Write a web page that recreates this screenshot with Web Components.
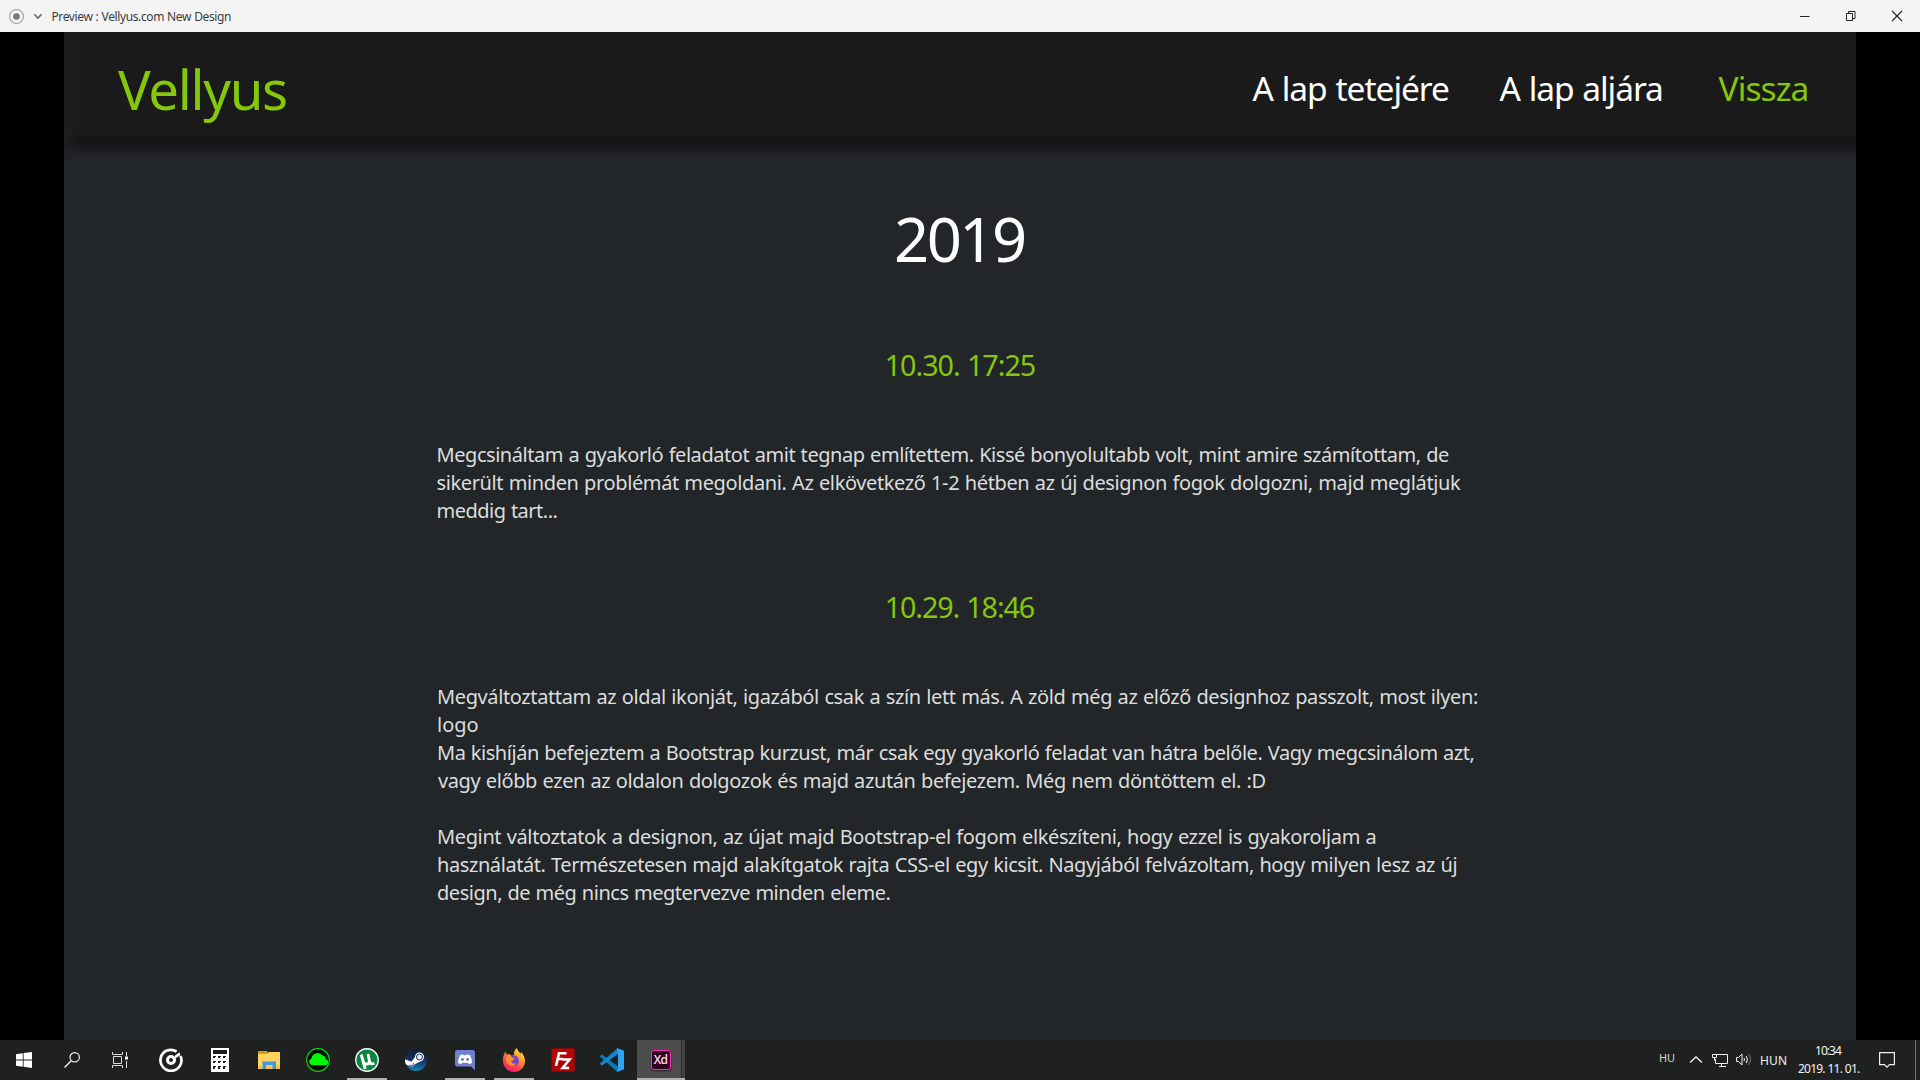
<!DOCTYPE html>
<html lang="hu">
<head>
<meta charset="utf-8">
<title>Preview : Vellyus.com New Design</title>
<style>
html,body{margin:0;padding:0;background:#000;overflow:hidden}
body{width:1920px;height:1080px;font-family:"Noto Sans","Open Sans",sans-serif}
</style>
</head>
<body>
<app-desktop></app-desktop>
<script>
const define = (name, html, after) => customElements.define(name, class extends HTMLElement {
  connectedCallback() {
    if (this.shadowRoot) return;
    const t = document.createElement('template');
    t.innerHTML = html;
    this.attachShadow({mode: 'open'}).append(t.content.cloneNode(true));
    if (after) after(this);
  }
});

/* One line of text whose tracking is tuned so that its ink spans the "measure" attribute. */
const ctx = document.createElement('canvas').getContext('2d');
customElements.define('fit-line', class extends HTMLElement {
  connectedCallback() {
    if (this.shadowRoot) return;
    const root = this.attachShadow({mode: 'open'});
    root.innerHTML = '<style>:host{display:block;white-space:nowrap;font-variant-ligatures:none}span{display:inline-block}</style><span></span>';
    const text = this.getAttribute('text'), span = root.querySelector('span');
    span.textContent = text;
    const cs = getComputedStyle(this);
    ctx.font = `${cs.fontWeight} ${cs.fontSize} ${cs.fontFamily}`;
    const m = ctx.measureText(text), w = +this.getAttribute('measure');
    const word = parseFloat(cs.fontSize) * 0.035, spaces = text.split(' ').length - 1;
    const gap = (w - word * spaces - m.actualBoundingBoxLeft - m.actualBoundingBoxRight) / (text.length - 1);
    span.style.letterSpacing = gap.toFixed(4) + 'px';
    span.style.wordSpacing = word.toFixed(3) + 'px';
    span.style.width = w + 'px';
    span.style.textIndent = m.actualBoundingBoxLeft.toFixed(2) + 'px';
  }
});

define('title-bar', `<style>
:host{display:flex;height:32px;background:#f4f4f4;align-items:center;justify-content:space-between;color:#3c3c3c}
.l{display:flex;align-items:center;height:32px;padding-left:8px}
.l fit-line{font-size:12px;line-height:32px;padding:1px 0 0 10.500px}
.r{display:flex}.r svg{width:46px;height:32px}
</style>
<div class="l">
<svg width="17" height="17" viewBox="0 0 17 17"><circle cx="8.5" cy="8.5" r="7" fill="none" stroke="#a0a0a0" stroke-width="1.1"/><circle cx="8.5" cy="8.5" r="3.3" fill="#777"/></svg>
<svg width="17" height="17" viewBox="0 0 17 17"><path d="M9.300 6.300l3.600 3.800 3.600-3.800" fill="none" stroke="#6a6a6a" stroke-width="1.6"/></svg>
<fit-line measure="178.5" text="Preview : Vellyus.com New Design"></fit-line></div>
<div class="r">
<svg viewBox="0 0 46 32"><path d="M18 16.500h9.500" stroke="#222"/></svg>
<svg viewBox="0 0 46 32"><path d="M18.500 13.500h6v7h-6zM20.500 13v-1.500h6.500v7h-2" fill="none" stroke="#222"/></svg>
<svg viewBox="0 0 46 32"><path d="M18 11l10 10M28 11l-10 10" stroke="#222" stroke-width="1.1"/></svg>
</div>`);

define('site-header', `<style>
:host{display:flex;height:111px;position:relative;justify-content:space-between;line-height:111px;background:#1a1a1a}
.logo{font-size:54.500px;color:#84c70b;padding:1.500px 0 0 54px}
nav{display:flex;font-size:33.500px;color:#fff;padding:1px 48.500px 0 0}
nav fit-line+fit-line{margin-left:50.500px}
nav fit-line.back{color:#84c70b;margin-left:56.500px}
.shade{position:absolute;left:0;right:0;top:99px;height:29px;pointer-events:none;background:linear-gradient(#1a1a1a 0,#171818 14%,#131415 30%,#131415 42%,#1a1d1f 64%,#1f2326 82%,#222629)}
.edge{position:absolute;left:0;top:0;width:18px;height:128px;background:linear-gradient(90deg,#1f2224aa,#1f222400)}
</style>
<div class="shade"></div><div class="edge"></div>
<fit-line class="logo" measure="168" text="Vellyus"></fit-line>
<nav><fit-line measure="196.500" text="A lap tetejére"></fit-line><fit-line measure="162.500" text="A lap aljára"></fit-line><fit-line class="back" measure="89" text="Vissza"></fit-line></nav>`);

/* A dated entry: heading above, slotted lines below. */
define('log-entry', `<style>
:host{display:block}
.d{display:flex;justify-content:center;font-size:28.700px;line-height:40px;color:#84c70b;padding-left:1.500px}
.b{margin-top:56px;font-size:20px;line-height:28px;color:#dcdddd;padding-left:373.500px}
:host(:not(.first)) .b{padding-left:374px}
</style><div class="d"></div><div class="b"><slot></slot></div>`, el => {
  const h = document.createElement('fit-line');
  h.setAttribute('text', el.getAttribute('date'));
  h.setAttribute('measure', '148');
  el.shadowRoot.querySelector('.d').append(h);
});

define('site-page', `<style>
:host{display:block;width:1792px;height:1008px;background:#222629;margin:0 64px;overflow:hidden}
.y{display:flex;justify-content:center;font-size:61.500px;line-height:80px;color:#fff;margin-top:55px}
.blank{height:28px}
log-entry{margin-top:62px}log-entry.first{margin-top:67px}
</style>
<site-header></site-header>
<div class="y"><fit-line measure="128" text="2019"></fit-line></div>
<log-entry class="first" date="10.30. 17:25">
<fit-line measure="1011.500" text="Megcsináltam a gyakorló feladatot amit tegnap említettem. Kissé bonyolultabb volt, mint amire számítottam, de"></fit-line>
<fit-line measure="1023.500" text="sikerült minden problémát megoldani. Az elkövetkező 1-2 hétben az új designon fogok dolgozni, majd meglátjuk"></fit-line>
<fit-line measure="119" text="meddig tart..."></fit-line>
</log-entry>
<log-entry date="10.29. 18:46">
<fit-line measure="1039" text="Megváltoztattam az oldal ikonját, igazából csak a szín lett más. A zöld még az előző designhoz passzolt, most ilyen:"></fit-line>
<fit-line measure="40.500" text="logo"></fit-line>
<fit-line measure="1035.500" text="Ma kishíján befejeztem a Bootstrap kurzust, már csak egy gyakorló feladat van hátra belőle. Vagy megcsinálom azt,"></fit-line>
<fit-line measure="827.500" text="vagy előbb ezen az oldalon dolgozok és majd azután befejezem. Még nem döntöttem el. :D"></fit-line>
<div class="blank"></div>
<fit-line measure="937.500" text="Megint változtatok a designon, az újat majd Bootstrap-el fogom elkészíteni, hogy ezzel is gyakoroljam a"></fit-line>
<fit-line measure="1018.500" text="használatát. Természetesen majd alakítgatok rajta CSS-el egy kicsit. Nagyjából felvázoltam, hogy milyen lesz az új"></fit-line>
<fit-line measure="451.500" text="design, de még nincs megtervezve minden eleme."></fit-line>
</log-entry>`);

define('task-button', `<style>
:host{display:flex;width:48px;height:40px;align-items:center;justify-content:center;box-sizing:border-box;margin-right:1px}
:host([tight]){margin-right:0}
:host([running]){background:linear-gradient(#b2afb0,#b2afb0) 4px 38px/40px 2px no-repeat}
:host([active]){padding-right:1px;background:linear-gradient(#b2afb0,#b2afb0) 0 38px/48px 2px no-repeat,linear-gradient(90deg,#4c4d4c 44px,#2b2c2c 44px,#2b2c2c 45px,#424342 45px)}
</style><slot></slot>`);

define('task-bar', `<style>
:host{display:flex;height:40px;background:#1f2120;justify-content:space-between;color:#f2f2f2}
.a,.t{display:flex;height:40px}svg{display:block}
.sp{width:3px}
.xd{display:flex;box-sizing:border-box;width:20px;height:20px;border:1px solid #ff2bc2;border-radius:3px;background:#2e001e;color:#ffd9f2;font:600 12px/17px "Open Sans";justify-content:center;letter-spacing:-.6px;box-shadow:0 1px 2px #0008}
.t{align-items:center}
.hu{font-size:11px;line-height:36px;color:#d8d5c8;margin-right:15px;align-self:flex-start}
.hun{font-size:12px;line-height:39px;margin-left:9px}
.clock{display:flex;flex-direction:column;align-items:center;font-size:12px;line-height:18px;width:64px;margin-left:11px}
.end{width:1px;height:40px;background:#777;margin:0 4px 0 20px}
</style>
<div class="a">
<task-button tight><svg width="16" height="16" viewBox="0 0 16 16"><path fill="#fff" d="M0 2.200l6.800-1v6.300H0zM7.600 1.100L16 0v7.500H7.600zM0 8.400h6.800v6.300L0 13.800zM7.600 8.400H16V16l-8.400-1.200z"/></svg></task-button>
<task-button tight><svg width="16" height="16" viewBox="0 0 16 16"><circle cx="10.700" cy="5.300" r="4.700" fill="none" stroke="#f0f0f0" stroke-width="1.200"/><path d="M7.200 8.800L.5 15.500" stroke="#f0f0f0" stroke-width="1.400"/></svg></task-button>
<task-button tight><svg width="16" height="16" viewBox="0 0 16 16"><path d="M.5 0v2.500h10V0M.5 16v-2.500h10V16M1.500 4.500h8v7h-8zM14.500 0v4M14.500 9v7" fill="none" stroke="#ddd"/><path d="M13 4.500h3v3h-3z" fill="#fff"/></svg></task-button>
<div class="sp"></div>
<task-button><svg width="24" height="24" viewBox="0 0 24 24"><path d="M17.600 3.500A10.500 10.500 0 1 0 21.500 8" fill="none" stroke="#fff" stroke-width="2.700"/><circle cx="12" cy="12" r="3.500" fill="none" stroke="#fff" stroke-width="3"/><path d="M16 9.500V7.500l4.500-3.300.8 3-4.800 3z" fill="#fff"/></svg></task-button>
<task-button><svg width="24" height="24" viewBox="0 0 24 24"><path fill="#fff" d="M3 0h18v24H3z"/><path fill="#1c1e1d" d="M5 2h14v4H5z"/><path fill="#1c1e1d" d="M5 8h3v1H7v1H5zM10 8h3v1h-1v1h-2zM15 8h3v1h-1v1h-2zM5 13h3v1H7v1H5zM10 13h3v1h-1v1h-2zM15 13h3v1h-1v1h-2zM5 18h3v1H7v2H5zM10 18h3v1h-1v2h-2zM15 18h3v1h-1v2h-2z"/></svg></task-button>
<task-button><svg width="24" height="24" viewBox="0 0 24 24"><path fill="#dc9805" d="M1 3h9l1.500 2H22v6H1z"/><path fill="#ffd45e" d="M1 6h9l2-2h11v17H1z"/><path fill="#f5c34a" d="M1 18h22v3H1z"/><path fill="#3f9add" d="M5.500 13h13.500v8h-3.500v-4H9v4H5.500z"/><path fill="#75bdf0" d="M6 13h12.500v1H6z"/></svg></task-button>
<task-button><svg width="24" height="24" viewBox="0 0 24 24"><circle cx="12" cy="12" r="11.300" fill="#020a02" stroke="#08d80b" stroke-width="1.200"/><path fill="#00fa05" d="M6 17.200a3.400 3.400 0 0 1-.5-6.600 6 6 0 0 1 10.600-3.300 4 4 0 0 1 3.500 4 3 3 0 0 1 .4 5.900z"/></svg></task-button>
<task-button running><svg width="24" height="24" viewBox="0 0 24 24"><circle cx="12" cy="12" r="11.900" fill="#fff"/><circle cx="12" cy="12" r="10.600" fill="#07873e"/><path d="M6.200 6.500l4 14.500M8.200 13.500c1.500 3.800 6.300 3.300 6.200-.5L13 6M14.400 13c.6 2.800 2.500 3.500 5 2.200" fill="none" stroke="#fff" stroke-width="2.900"/></svg></task-button>
<task-button><svg width="24" height="24" viewBox="0 0 24 24"><defs><linearGradient id="s" x2="0" y2="1"><stop stop-color="#101e40"/><stop offset=".55" stop-color="#123360"/><stop offset="1" stop-color="#1687bd"/></linearGradient><clipPath id="sc"><circle cx="12" cy="12" r="11"/></clipPath></defs><circle cx="12" cy="12" r="11" fill="url(#s)"/><g clip-path="url(#sc)"><path d="M0 11l7.500 2.800 4-5.500 5 5-5.500 3-3 2.500-4-1.500L0 15.500z" fill="#fff"/></g><circle cx="15.500" cy="9" r="4.500" fill="#fff"/><circle cx="15.500" cy="9" r="3" fill="#eee" stroke="#17315b" stroke-width="1"/><path d="M5.500 16.800c1.500 1.800 4.300.7 3.900-1.500" fill="none" stroke="#17315b"/></svg></task-button>
<task-button running><svg width="24" height="24" viewBox="0 0 24 24"><path fill="#6e81cc" d="M4.500 2h15Q22 2 22 4.500V22l-4-3.500H4.500Q2 18.500 2 16V4.500Q2 2 4.500 2z"/><path fill="#fff" d="M7 7.300l3-1 .5.900h3l.5-.9 3 1q2 3.500 2 7.500-1.500 1.200-3.300 1.200l-.8-1.300H9.100L8.300 16Q6.500 16 5 14.800 5 10.800 7 7.300z"/><circle cx="9.500" cy="11.500" r="1.400" fill="#6676bd"/><circle cx="14.500" cy="11.500" r="1.400" fill="#6676bd"/></svg></task-button>
<task-button running><svg width="24" height="24" viewBox="0 0 24 24"><defs><linearGradient id="f" x1=".85" y1="0" x2=".25" y2="1"><stop stop-color="#fff04a"/><stop offset=".4" stop-color="#ff982a"/><stop offset=".75" stop-color="#ff3a50"/><stop offset="1" stop-color="#e81b7f"/></linearGradient></defs><path fill="url(#f)" d="M1 13C.6 9 2 6 3.700 3.500L4.500 6.500 7.500 6 9 7.500 12 7C11.500 4 13 1.500 15 0c.3 3 2.500 3.800 3.500 6l.5-2c2.500 2.500 4 5.500 4 9a11 11 0 0 1-22 0z"/><path fill="#7541cf" d="M8 8c3-2 9-.5 9 5 0 3-2 4.500-4.500 4.500S8.500 16 8 14l4-2-3-1.500z"/><path fill="#ff922e" d="M4 9l4-2 2 2.500 2.500.5c-.5 2-3.500 2-3.500 3 .5 2.500 3 3.200 5 2.200-2 4.800-10 2.500-10-3.700z"/></svg></task-button>
<task-button><svg width="24" height="24" viewBox="0 0 24 24"><path fill="#b90605" stroke="#850606" stroke-dasharray="1 1" d="M.5.500h23v23H.5z"/><path fill="#a30000" d="M1 13h22v10H1z" opacity=".45"/><path d="M5 18L8 5.200h7.500M6.500 11h5.500M11.500 11.500h7L11.700 20h6.500" fill="none" stroke="#fff" stroke-width="2.600"/></svg></task-button>
<task-button><svg width="24" height="24" viewBox="0 0 24 24"><path fill="#0879bf" d="M0 8l2-1.500L17.500 18v6L0 8.800z"/><path fill="#1685cf" d="M0 16l2 1.800L18 6V0L0 15.200z"/><path fill="#30a5ef" d="M17 0l7 2.800v18.400L17 24l1-6V6z"/></svg></task-button>
<task-button active><div class="xd">Xd</div></task-button>
</div>
<div class="t">
<fit-line class="hu" measure="15" text="HU"></fit-line>
<svg viewBox="0 0 62 16" style="width:62px;height:16px;overflow:visible"><path d="M0 10.500L6 5l6 5.500" fill="none" stroke="#f0f0f0" stroke-width="1.300"/><path d="M26 2.500h11.500v9H25.500V7M29 14.500h7M31.500 12v2M22.500 2.500h4v3h-4zM24.500 5.500v3" fill="none" stroke="#f0f0f0"/><path d="M46.500 5.500h2l3.500-3.500v11l-3.500-3.500h-2z" fill="none" stroke="#f0f0f0"/><path d="M54 6q1 1.500 0 3M56 4q2.600 3.500 0 7" fill="none" stroke="#eee" stroke-width="1.100"/><path d="M58.500 2q4 5.500 0 11" fill="none" stroke="#777"/></svg>
<fit-line class="hun" measure="25" text="HUN"></fit-line>
<div class="clock"><fit-line measure="26" text="10:34"></fit-line><fit-line measure="62" text="2019. 11. 01."></fit-line></div>
<svg width="16" height="16" viewBox="0 0 16 16" style="margin-left:18px"><path d="M.6.600h14.800v12H10.500L8 15.200 5.500 12.600H.6z" fill="none" stroke="#f0f0f0" stroke-width="1.200"/></svg>
<div class="end"></div>
</div>`);

define('app-desktop', `<style>:host{display:flex;flex-direction:column;width:1920px;height:1080px;background:#000}</style>
<title-bar></title-bar><site-page></site-page><task-bar></task-bar>`);
</script>
</body>
</html>
